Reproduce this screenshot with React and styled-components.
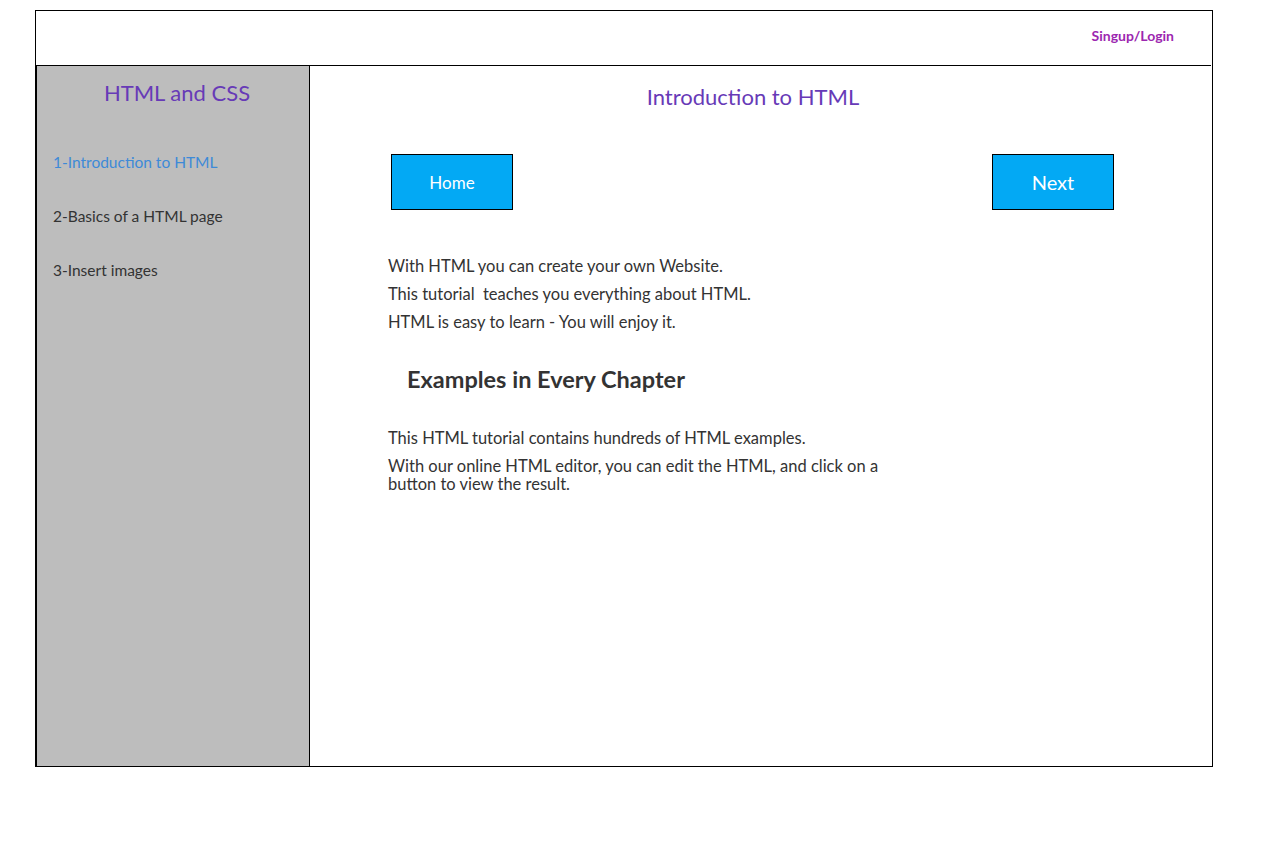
import React from 'react';
import styled, { createGlobalStyle } from 'styled-components';

const GlobalStyle = createGlobalStyle`
    body {
        margin: 0;
        background: #ffffff;
        font-family: "Lato", "Noto Sans", sans-serif;
        color: #333333;
    }
`;

const Frame = styled.div`
    margin: 10px 0 0 35px;
    width: 1178px;
    height: 757px;
    box-sizing: border-box;
    border: 1px solid #000;

    display: flex;
    flex-direction: column;
`;

const Header = styled.header`
    height: 55px;
    flex-shrink: 0;
    border-bottom: 1px solid #000;
    margin-right: 1px;

    display: flex;
    justify-content: flex-end;
    align-items: flex-start;
    padding: 16px 37px 0 0;
    box-sizing: border-box;
`;

const AuthLink = styled.a`
    font-size: 14px;
    line-height: 17px;
    font-weight: 700;
    color: #9c27b0;
    text-decoration: none;
`;

const Body = styled.div`
    flex: 1;
    display: flex;
`;

const Sidebar = styled.aside`
    width: 275px;
    flex-shrink: 0;
    box-sizing: border-box;
    background: #bdbdbd;
    border: 1px solid #000;
    border-left-width: 2px;
    border-right-width: 1px;
    margin: -1px 0 -1px -1px;

    display: flex;
    flex-direction: column;
`;

const SideTitle = styled.h2`
    margin: 13px 0 0;
    padding-left: 8px;
    text-align: center;
    font-size: 22px;
    font-weight: 400;
    color: #673ab7;
`;

const NavList = styled.nav`
    margin-top: 46px;
    padding-left: 16px;
    display: flex;
    flex-direction: column;
    gap: 34px;
`;

const NavItem = styled.a`
    font-size: 15.5px;
    line-height: 20px;
    color: ${props => props.active ? '#3d8ad8' : '#333'};
    text-decoration: none;
`;

const Main = styled.main`
    flex: 1;
    display: flex;
    flex-direction: column;
`;

const Title = styled.h1`
    margin: 17px 0 0;
    padding-right: 16px;
    text-align: center;
    font-size: 22px;
    font-weight: 400;
    color: #673ab7;
`;

const ButtonRow = styled.div`
    margin-top: 44px;
    padding: 0 98px 0 81px;
    display: flex;
    justify-content: space-between;
`;

const NavButton = styled.button`
    width: 122px;
    height: 56px;
    box-sizing: border-box;
    border: 1px solid #000;
    background: #03a9f4;
    color: #fff;
    font-family: inherit;
    font-size: ${props => props.big ? '20px' : '17px'};
`;

const Content = styled.section`
    margin-top: 47px;
    padding-left: 78px;
    max-width: 520px;
`;

const Para = styled.p`
    margin: 0 0 10px;
    font-size: 16.5px;
    line-height: 18px;
`;

const SubHeading = styled.h3`
    margin: 34px 0 36px 19px;
    font-size: 23.5px;
    font-weight: 700;
    color: #333;
`;

export default function App() {
    return (
        <>
            <GlobalStyle />
            <Frame>
                <Header>
                    <AuthLink href="#">Singup/Login</AuthLink>
                </Header>
                <Body>
                    <Sidebar>
                        <SideTitle>HTML and CSS</SideTitle>
                        <NavList>
                            <NavItem href="#" active>1-Introduction to HTML</NavItem>
                            <NavItem href="#">2-Basics of a HTML page</NavItem>
                            <NavItem href="#">3-Insert images</NavItem>
                        </NavList>
                    </Sidebar>
                    <Main>
                        <Title>Introduction to HTML</Title>
                        <ButtonRow>
                            <NavButton>Home</NavButton>
                            <NavButton big>Next</NavButton>
                        </ButtonRow>
                        <Content>
                            <Para>With HTML you can create your own Website.</Para>
                            <Para>This tutorial&nbsp; teaches you everything about HTML.</Para>
                            <Para>HTML is easy to learn - You will enjoy it.</Para>
                            <SubHeading>Examples in Every Chapter</SubHeading>
                            <Para>This HTML tutorial contains hundreds of HTML examples.</Para>
                            <Para>With our online HTML editor, you can edit the HTML, and click on a button to view the result.</Para>
                        </Content>
                    </Main>
                </Body>
            </Frame>
        </>
    );
}
